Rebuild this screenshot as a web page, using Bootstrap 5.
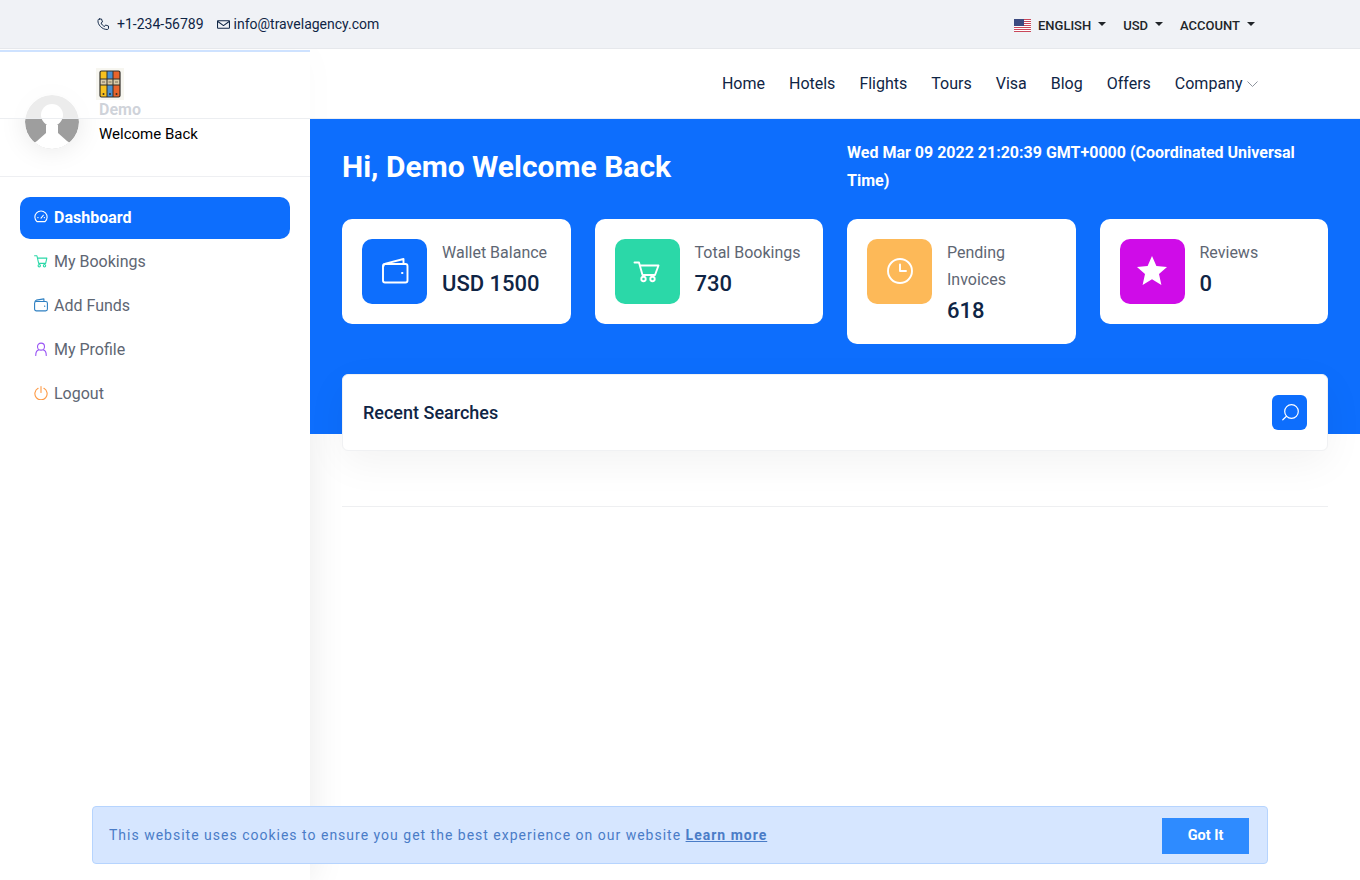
<!DOCTYPE html>
<html lang="en">
  <head>
    <meta charset="UTF-8" />
    <meta name="viewport" content="width=device-width, initial-scale=1.0" />
    <title>Dashboard</title>
    <link
      href="https://cdn.jsdelivr.net/npm/bootstrap@5.3.3/dist/css/bootstrap.min.css"
      rel="stylesheet"
    />
    <style>
      body {
        font-family: Roboto, "Liberation Sans", sans-serif;
        background: #fff;
        color: #0f2545;
        overflow: hidden;
      }
      svg {
        display: block;
        flex-shrink: 0;
      }
      .line-icon {
        fill: none;
        stroke: currentColor;
        stroke-width: 1.9;
        stroke-linecap: round;
        stroke-linejoin: round;
      }
      .ico-green {
        color: #2bd8a8;
      }
      .ico-blue {
        color: #2f80c2;
      }
      .ico-purple {
        color: #9a55f5;
      }
      .ico-orange {
        color: #fd9a45;
      }

      /* top strip */
      .top-strip {
        position: relative;
        z-index: 4;
        height: 49px;
        background: #f0f2f6;
        border-bottom: 1px solid #e6e8ec;
        padding: 0 105px 0 97px;
        font-size: 14px;
      }
      .top-strip a {
        color: #0f2545;
        text-decoration: none;
      }
      .phone-link {
        margin-right: 13px;
      }
      .strip-right {
        padding-top: 3px;
      }
      .strip-flag {
        margin-right: 7px;
      }
      .top-strip .strip-menu {
        color: #212529;
        font-size: 13px;
        font-weight: 500;
        text-decoration: none;
        margin-right: 17px;
      }
      .top-strip .strip-menu:last-child {
        margin-right: 0;
      }
      .strip-menu.dropdown-toggle::after {
        margin-left: 7px;
        border-top-width: 4px;
        border-left-width: 4px;
        border-right-width: 4px;
      }

      /* header lies over the sidebar */
      .page-wrap {
        min-height: calc(100vh - 49px);
      }
      .site-header {
        position: absolute;
        top: 0;
        left: 0;
        right: 0;
        height: 70px;
        z-index: 3;
        background: rgba(255, 255, 255, 0.8);
        border-bottom: 1px solid #eceef1;
        padding: 0 102.5px 0 96px;
      }
      .site-header a {
        color: #0f2545;
        text-decoration: none;
      }

      /* sidebar */
      .side-panel {
        position: relative;
        z-index: 1;
        width: 310px;
        flex-shrink: 0;
        margin-top: 1px;
        background: #fff;
        border-top: 2px solid #0d6efd;
        box-shadow: 0 0 35px rgba(0, 0, 0, 0.09);
      }
      .side-profile {
        padding: 43px 20px 27px 25px;
        border-bottom: 1px solid #eeeff2;
      }
      .side-avatar {
        margin-right: 20px;
        border-radius: 50%;
        box-shadow: 0 0 28px rgba(0, 0, 0, 0.1);
      }
      .side-name {
        font-size: 16px;
        font-weight: 700;
        line-height: 25px;
        color: #0f2545;
      }
      .side-welcome {
        font-size: 15px;
        line-height: 25px;
        color: #000;
      }
      .side-nav {
        padding: 20px;
      }
      .side-nav .nav-link {
        height: 42px;
        margin-bottom: 2px;
        padding: 0 14px;
        border-radius: 10px;
        color: #5e6673;
        font-size: 16px;
      }
      .side-nav .nav-link svg {
        margin: 0 6px 2px 0;
      }
      .side-nav .nav-link.active {
        background: #0d6efd;
        color: #fff;
        font-weight: 700;
      }

      /* blue band */
      .main-area {
        min-width: 0;
        margin-top: 70px;
      }
      .blue-band {
        position: relative;
        z-index: 2;
        height: 315px;
        padding: 20px 32px 0;
        background: #0d6efd;
        color: #fff;
      }
      .hi-title {
        font-size: 30px;
        font-weight: 700;
        margin: 10px 0 0;
      }
      .date-text {
        font-size: 16px;
        font-weight: 700;
        line-height: 28px;
      }
      .stat-row {
        margin-top: 0;
        margin-bottom: 30px;
      }
      .stat-tile {
        padding: 20px;
        border-radius: 10px;
        background: #fff;
      }
      .stat-icon {
        width: 65px;
        height: 65px;
        margin-right: 15px;
        border-radius: 10px;
        color: #fff;
      }
      .stat-label {
        font-size: 16px;
        line-height: 27px;
        color: #5e6673;
      }
      .stat-value {
        margin-top: 5px;
        font-size: 22px;
        font-weight: 500;
        line-height: 26px;
        color: #0f2545;
      }
      .icon-blue {
        background: #0d6efd;
      }
      .icon-green {
        background: #2bd8a8;
      }
      .icon-orange {
        background: #fdb958;
      }
      .icon-magenta {
        background: #cf0ce8;
      }

      /* recent searches */
      .recent-card {
        height: 77px;
        padding: 0 20px;
        border-radius: 6px;
        border: 1px solid #f0f1f3;
        background: #fff;
        color: #0f2545;
        box-shadow: 0 12px 40px rgba(0, 0, 0, 0.05);
      }
      .recent-title {
        font-size: 18px;
        font-weight: 500;
      }
      .search-btn {
        width: 35px;
        height: 35px;
        padding: 0;
        border-radius: 6px;
        border: 0;
        background: #0d6efd;
        color: #fff;
      }
      .search-btn .line-icon {
        stroke-width: 1.2;
      }
      .under-rule {
        margin: 72px 32px 0;
        border-top: 1px solid #eeeff1;
      }

      /* cookie bar */
      .cookie-bar {
        position: fixed;
        left: 92px;
        right: 92px;
        bottom: 16px;
        z-index: 5;
        height: 58px;
        padding: 0 18px 0 16px;
        border-radius: 4px;
        border: 1px solid #b6d4fe;
        background: #d6e6ff;
        color: #4a7cc7;
        font-size: 14px;
        letter-spacing: 1px;
      }
      .cookie-bar a {
        color: #4a7cc7;
        font-weight: 700;
      }
      .cookie-btn {
        width: 87px;
        height: 36px;
        margin-top: 2px;
        padding: 0;
        border: 0;
        border-radius: 0;
        background: #2e8bff;
        color: #fff;
        font-size: 14.5px;
        font-weight: 700;
      }
    </style>
  </head>
  <body>
    <!-- Top strip -->
    <div class="top-strip d-flex align-items-center justify-content-between">
      <div class="d-flex align-items-center">
        <svg class="line-icon me-2" width="12" height="12" viewBox="0 0 24 24">
          <path d="M5 2h4l2 6-3 2c1.500 3 3.500 5.500 7 7l2-3 6 2v4c0 2-1 3-3 3C10 23 1 13 2 5c0-2 1-3 3-3z" />
        </svg>
        <a href="#" class="phone-link">+1-234-56789</a>
        <svg class="line-icon me-1" width="13" height="13" viewBox="0 0 24 24">
          <rect x="1" y="5" width="22" height="14" rx="1" />
          <path d="M1 6l11 8 11-8" />
        </svg>
        <a href="#">info@travelagency.com</a>
      </div>
      <div class="strip-right d-flex align-items-center">
        <svg class="strip-flag" width="17" height="13" viewBox="0 0 17 13">
          <rect width="17" height="13" fill="#fff" />
          <path d="M0 .5h17M0 2.500h17M0 4.500h17M0 6.500h17M0 8.500h17M0 10.500h17M0 12.500h17" stroke="#c9485b" />
          <rect width="10" height="7" fill="#3c4a80" />
        </svg>
        <a href="#" class="strip-menu dropdown-toggle">ENGLISH</a>
        <a href="#" class="strip-menu dropdown-toggle">USD</a>
        <a href="#" class="strip-menu dropdown-toggle">ACCOUNT</a>
      </div>
    </div>

    <div class="page-wrap position-relative d-flex">
      <!-- Header -->
      <header class="site-header d-flex align-items-center justify-content-between">
        <svg width="28" height="32" viewBox="0 0 28 32">
          <rect width="28" height="32" fill="#f7f6f0" />
          <rect x="4" y="3" width="7" height="26" fill="#f7c11e" />
          <rect x="11" y="3" width="6" height="26" fill="#4a90d0" />
          <rect x="17" y="3" width="7" height="26" fill="#e8642c" />
          <rect x="4" y="11" width="20" height="6" fill="#d9cba8" />
          <rect x="4" y="3" width="20" height="26" rx="1.500" fill="none" stroke="#33302a" stroke-width="1.200" />
          <path d="M11 3v26M17 3v26M4 11h20M4 17h20" stroke="#33302a" />
          <path d="M6 14h3M12.500 14h3M19 14h3" stroke="#7a6f5a" />
          <circle cx="7.500" cy="26" r="1" fill="#33302a" />
          <circle cx="14" cy="26" r="1" fill="#33302a" />
          <circle cx="20.500" cy="26" r="1" fill="#33302a" />
        </svg>
        <nav class="d-flex align-items-center gap-4">
          <a href="#">Home</a>
          <a href="#">Hotels</a>
          <a href="#">Flights</a>
          <a href="#">Tours</a>
          <a href="#">Visa</a>
          <a href="#">Blog</a>
          <a href="#">Offers</a>
          <a href="#" class="d-flex align-items-center">
            Company
            <svg class="ms-1" width="11" height="11" viewBox="0 0 11 11" fill="none" stroke="#8f959e">
              <path d="M.5 3.500l5 5 5-5" />
            </svg>
          </a>
        </nav>
      </header>

      <!-- Sidebar -->
      <aside class="side-panel">
        <div class="side-profile d-flex align-items-center">
          <svg class="side-avatar flex-shrink-0" width="54" height="54" viewBox="0 0 54 54">
            <circle cx="27" cy="27" r="27" fill="#9e9e9e" />
            <circle cx="27" cy="20" r="11" fill="#fff" />
            <path d="M12 46l9-8v-8h12v8l9 8 12 8H0z" fill="#fff" />
          </svg>
          <div>
            <div class="side-name">Demo</div>
            <div class="side-welcome">Welcome Back</div>
          </div>
        </div>
        <nav class="side-nav nav flex-column">
          <a class="nav-link active d-flex align-items-center" href="#">
            <svg class="line-icon" width="14" height="14" viewBox="0 0 24 24">
              <path d="M5 20a10.500 10.500 0 1 1 14 0z" />
              <path d="M12 14l4-5M6.500 13h.5M17.500 13h.5" />
            </svg>
            Dashboard
          </a>
          <a class="nav-link d-flex align-items-center" href="#">
            <svg class="line-icon ico-green" width="14" height="14" viewBox="0 0 24 24">
              <path d="M1 3h4l3 13h12l2-9H6" />
              <circle cx="9" cy="20" r="2" />
              <circle cx="18" cy="20" r="2" />
            </svg>
            My Bookings
          </a>
          <a class="nav-link d-flex align-items-center" href="#">
            <svg class="line-icon ico-blue" width="14" height="14" viewBox="0 0 24 24">
              <rect x="1" y="6" width="22" height="16" rx="3" />
              <path d="M2 6c0-1 1-2 2-2.300L17 1.500V6M18 14h.5" />
            </svg>
            Add Funds
          </a>
          <a class="nav-link d-flex align-items-center" href="#">
            <svg class="line-icon ico-purple" width="14" height="14" viewBox="0 0 24 24">
              <circle cx="12" cy="8" r="6" />
              <path d="M3 23c0-6 3-9 5-9.500M21 23c0-6-3-9-5-9.500" />
            </svg>
            My Profile
          </a>
          <a class="nav-link d-flex align-items-center" href="#">
            <svg class="line-icon ico-orange" width="14" height="14" viewBox="0 0 24 24">
              <path d="M7 4a10.500 10.500 0 1 0 10 0M12 1v10" />
            </svg>
            Logout
          </a>
        </nav>
      </aside>

      <!-- Main content -->
      <main class="main-area flex-grow-1">
        <section class="blue-band">
          <div class="row g-4">
            <div class="col-6">
              <h1 class="hi-title">Hi, Demo Welcome Back</h1>
            </div>
            <div class="col-6">
              <div class="date-text">Wed Mar 09 2022 21:20:39 GMT+0000 (Coordinated Universal Time)</div>
            </div>
          </div>
          <div class="row g-4 align-items-start stat-row">
            <div class="col-3">
              <div class="stat-tile d-flex">
                <div class="stat-icon icon-blue d-flex align-items-center justify-content-center">
                  <svg class="line-icon" width="28" height="28" viewBox="0 0 28 28">
                    <rect x="2" y="6" width="24.500" height="18.500" rx="2" />
                    <path d="M2.500 8c0-1 1-2 2-2.300L22.500 1v5M21 15h.5" />
                  </svg>
                </div>
                <div>
                  <div class="stat-label">Wallet Balance</div>
                  <div class="stat-value">USD 1500</div>
                </div>
              </div>
            </div>
            <div class="col-3">
              <div class="stat-tile d-flex">
                <div class="stat-icon icon-green d-flex align-items-center justify-content-center">
                  <svg class="line-icon" width="28" height="28" viewBox="0 0 28 28">
                    <path d="M1.500 4.500H6L9.500 17H22l3.500-9.500H7" />
                    <circle cx="10.500" cy="21" r="2.200" />
                    <circle cx="19.500" cy="21" r="2.200" />
                  </svg>
                </div>
                <div>
                  <div class="stat-label">Total Bookings</div>
                  <div class="stat-value">730</div>
                </div>
              </div>
            </div>
            <div class="col-3">
              <div class="stat-tile d-flex">
                <div class="stat-icon icon-orange d-flex align-items-center justify-content-center flex-shrink-0">
                  <svg class="line-icon" width="28" height="28" viewBox="0 0 28 28">
                    <circle cx="14" cy="13" r="12" />
                    <path d="M14 6.500V13h6" />
                  </svg>
                </div>
                <div>
                  <div class="stat-label">Pending Invoices</div>
                  <div class="stat-value">618</div>
                </div>
              </div>
            </div>
            <div class="col-3">
              <div class="stat-tile d-flex">
                <div class="stat-icon icon-magenta d-flex align-items-center justify-content-center">
                  <svg width="30" height="31" viewBox="0 0 30 31" fill="#fff">
                    <path d="M15 0l4.400 10 10.600 1-8 7 2.400 11L15 23.300 5.600 29 8 18l-8-7 10.600-1z" />
                  </svg>
                </div>
                <div>
                  <div class="stat-label">Reviews</div>
                  <div class="stat-value">0</div>
                </div>
              </div>
            </div>
          </div>
          <div class="recent-card d-flex align-items-center justify-content-between">
            <div class="recent-title">Recent Searches</div>
            <button class="search-btn btn d-flex align-items-center justify-content-center" type="button" aria-label="Search">
              <svg class="line-icon" width="18" height="18" viewBox="0 0 18 18">
                <circle cx="10.500" cy="7.500" r="6.800" />
                <path d="M5.500 12.300l-3.700 3.500" />
              </svg>
            </button>
          </div>
        </section>
        <div class="under-rule"></div>
      </main>
    </div>

    <!-- Cookie notice -->
    <div class="cookie-bar d-flex align-items-center justify-content-between">
      <div>This website uses cookies to ensure you get the best experience on our website <a href="#">Learn more</a></div>
      <button class="cookie-btn btn" type="button">Got It</button>
    </div>

    <script src="https://cdn.jsdelivr.net/npm/bootstrap@5.3.3/dist/js/bootstrap.bundle.min.js"></script>
  </body>
</html>
